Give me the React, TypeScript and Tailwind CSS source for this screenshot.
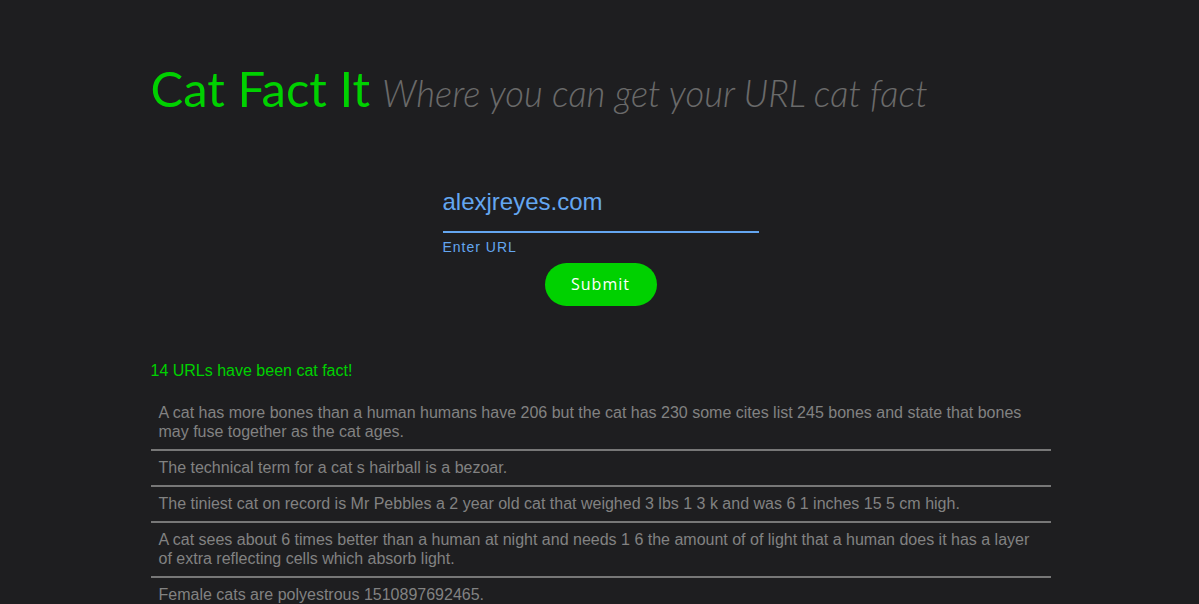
import React, { useState } from 'react';

const facts: string[] = [
  'A cat has more bones than a human humans have 206 but the cat has 230 some cites list 245 bones and state that bones may fuse together as the cat ages.',
  'The technical term for a cat s hairball is a bezoar.',
  'The tiniest cat on record is Mr Pebbles a 2 year old cat that weighed 3 lbs 1 3 k and was 6 1 inches 15 5 cm high.',
  'A cat sees about 6 times better than a human at night and needs 1 6 the amount of of light that a human does it has a layer of extra reflecting cells which absorb light.',
  'Female cats are polyestrous 1510897692465.',
];

export default function App() {
  const [url, setUrl] = useState('alexjreyes.com');

  return (
    <div className="min-h-screen bg-[#1e1e20] font-['Liberation_Sans',Arial,sans-serif]">
      <div className="mx-auto w-[900px] translate-x-[1px] pt-[58px]">
        <h1 className="flex items-baseline gap-[12px] font-['Lato',sans-serif]">
          <span className="text-[49px] font-normal leading-[60px] text-[#00d100]">Cat Fact It</span>
          <span className="text-[36.5px] font-light italic text-[#6a6a6a]">Where you can get your URL cat fact</span>
        </h1>

        <form
          className="mt-[67px] flex flex-col items-center"
          onSubmit={(e) => e.preventDefault()}
        >
          <div className="w-[316px]">
            <input
              value={url}
              onChange={(e) => setUrl(e.target.value)}
              className="block w-full border-b-2 border-[#64a6f0] bg-transparent pb-[15px] text-[24px] leading-[28px] text-[#64a6f0] outline-none"
            />
            <label className="mt-[6px] block text-[14px] leading-[16px] tracking-[1px] text-[#64a6f0]">
              Enter URL
            </label>
          </div>
          <button
            type="submit"
            className="mt-[8px] h-[43px] w-[112px] rounded-full bg-[#00d100] font-['Open_Sans',sans-serif] text-[16px] tracking-[1px] text-white"
          >
            Submit
          </button>
        </form>

        <p className="mt-[55px] text-[16px] leading-[19px] text-[#00d100]">14 URLs have been cat fact!</p>

        <ul className="mt-[16px]">
          {facts.map((fact, i) => (
            <li
              key={i}
              className="border-b-2 border-[#777777] px-[8px] pt-[7px] pb-[8px] text-[16px] leading-[19px] text-[#828282] last:border-b-0"
            >
              {fact}
            </li>
          ))}
        </ul>
      </div>
    </div>
  );
}
